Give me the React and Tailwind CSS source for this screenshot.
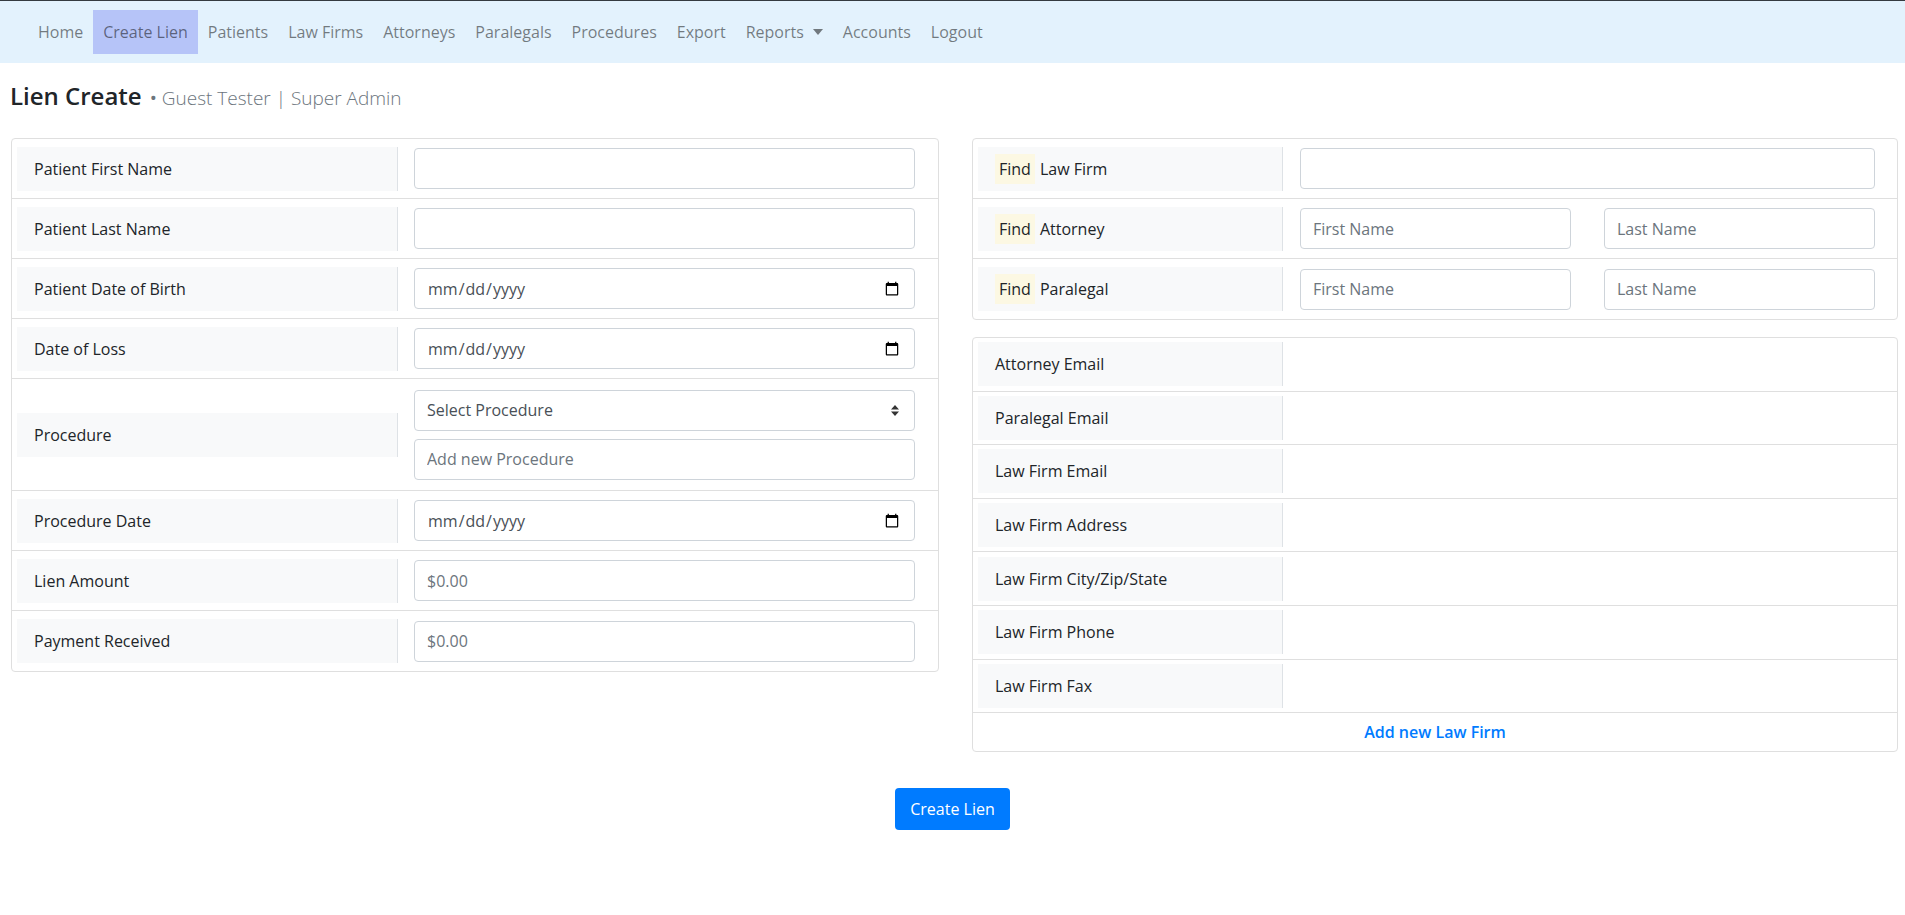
import React from 'react';

const navItems = ['Home', 'Create Lien', 'Patients', 'Law Firms', 'Attorneys', 'Paralegals', 'Procedures', 'Export', 'Reports', 'Accounts', 'Logout'];

const inputCls = 'w-full h-[41px] px-3 border border-[#ced4da] rounded-[4px] bg-white text-[16px] text-[#495057] placeholder:text-[#6c757d] outline-none';

const Label = ({ children, w }) => (
  <div className={`${w} h-[44px] shrink-0 bg-[#f8f9fa] border-r border-[#dee2e6] flex items-center pl-[17px] text-[16px] text-[#212529]`}>
    {children}
  </div>
);

const Find = ({ children }) => (
  <>
    <span className="bg-[#fcf8e3] px-[4px] leading-[30px] mr-[5px]">Find</span>
    {children}
  </>
);

const LeftRow = ({ label, children, last, tall }) => (
  <div className={`flex items-center pl-[5px] pr-[23px] ${tall ? 'h-[112px]' : 'h-[60px]'} ${last ? '' : 'border-b border-[#dfdfdf]'}`}>
    <Label w="w-[381px]">{label}</Label>
    <div className="ml-[16px] flex-1">{children}</div>
  </div>
);

const RightRow = ({ label, children, last }) => (
  <div className={`flex items-center pl-[5px] pr-[22px] h-[60px] ${last ? '' : 'border-b border-[#dfdfdf]'}`}>
    <Label w="w-[305px]">{label}</Label>
    <div className="ml-[17px] flex-1">{children}</div>
  </div>
);

const InfoRow = ({ label }) => (
  <div className="flex items-center pl-[5px] h-[53.6px] border-b border-[#dfdfdf]">
    <Label w="w-[305px]">{label}</Label>
  </div>
);

export default function App() {
  return (
    <div className="min-h-screen bg-white font-['Open_Sans',sans-serif] text-[#212529]">
      <nav className="h-[63px] border-t border-[#343a40] bg-[#e3f2fd] flex items-center pl-[28px]">
        {navItems.map((item) => (
          <a
            key={item}
            href="#"
            className={`h-[44px] px-[10px] flex items-center text-[16px] text-[rgba(0,0,0,0.5)] ${item === 'Create Lien' ? 'bg-[#b6c4f8]' : ''}`}
          >
            {item}
            {item === 'Reports' && (
              <svg width="10" height="6" viewBox="0 0 10 6" className="ml-[9px]">
                <path d="M0 0 L10 0 L5 6 Z" fill="rgba(0,0,0,0.5)" />
              </svg>
            )}
          </a>
        ))}
      </nav>

      <div className="h-[75px] pl-[10px] pt-[17px] flex items-baseline">
        <h1 className="text-[24px] font-semibold text-[#212529] leading-[32px]">Lien Create</h1>
        <span className="ml-[8px] text-[19px] font-light text-[#6c757d]">
          <span className="font-normal">•</span> Guest Tester | Super Admin
        </span>
      </div>

      <div className="flex items-start gap-[33px] pl-[11px] pr-[7px]">
        <div className="flex-1 border border-[#dfdfdf] rounded-[4px]">
          <LeftRow label="Patient First Name">
            <input className={inputCls} />
          </LeftRow>
          <LeftRow label="Patient Last Name">
            <input className={inputCls} />
          </LeftRow>
          <LeftRow label="Patient Date of Birth">
            <input type="date" className={inputCls} />
          </LeftRow>
          <LeftRow label="Date of Loss">
            <input type="date" className={inputCls} />
          </LeftRow>
          <LeftRow label="Procedure" tall>
            <div className="flex flex-col gap-[8px]">
              <div className="relative">
                <select className={`${inputCls} appearance-none text-[#212529]`}>
                  <option>Select Procedure</option>
                </select>
                <svg width="8" height="11" viewBox="0 0 8 11" className="absolute right-[16px] top-[15px] pointer-events-none">
                  <path d="M4 0 L8 4.5 L0 4.5 Z M0 6.5 L8 6.5 L4 11 Z" fill="#333" />
                </svg>
              </div>
              <input className={inputCls} placeholder="Add new Procedure" />
            </div>
          </LeftRow>
          <LeftRow label="Procedure Date">
            <input type="date" className={inputCls} />
          </LeftRow>
          <LeftRow label="Lien Amount">
            <input className={inputCls} placeholder="$0.00" />
          </LeftRow>
          <LeftRow label="Payment Received" last>
            <input className={inputCls} placeholder="$0.00" />
          </LeftRow>
        </div>

        <div className="flex-1">
          <div className="border border-[#dfdfdf] rounded-[4px]">
            <RightRow label={<Find>Law Firm</Find>}>
              <input className={inputCls} />
            </RightRow>
            <RightRow label={<Find>Attorney</Find>}>
              <div className="flex gap-[33px]">
                <input className={inputCls} placeholder="First Name" />
                <input className={inputCls} placeholder="Last Name" />
              </div>
            </RightRow>
            <RightRow label={<Find>Paralegal</Find>} last>
              <div className="flex gap-[33px]">
                <input className={inputCls} placeholder="First Name" />
                <input className={inputCls} placeholder="Last Name" />
              </div>
            </RightRow>
          </div>

          <div className="mt-[17px] border border-[#dfdfdf] rounded-[4px]">
            <InfoRow label="Attorney Email" />
            <InfoRow label="Paralegal Email" />
            <InfoRow label="Law Firm Email" />
            <InfoRow label="Law Firm Address" />
            <InfoRow label="Law Firm City/Zip/State" />
            <InfoRow label="Law Firm Phone" />
            <InfoRow label="Law Firm Fax" />
            <div className="h-[38px] flex items-center justify-center">
              <a href="#" className="text-[16px] font-semibold text-[#007bff]">Add new Law Firm</a>
            </div>
          </div>
        </div>
      </div>

      <div className="flex justify-center mt-[36px]">
        <button className="h-[42px] px-[15px] bg-[#007bff] text-white text-[16px] rounded-[4px]">Create Lien</button>
      </div>
    </div>
  );
}
